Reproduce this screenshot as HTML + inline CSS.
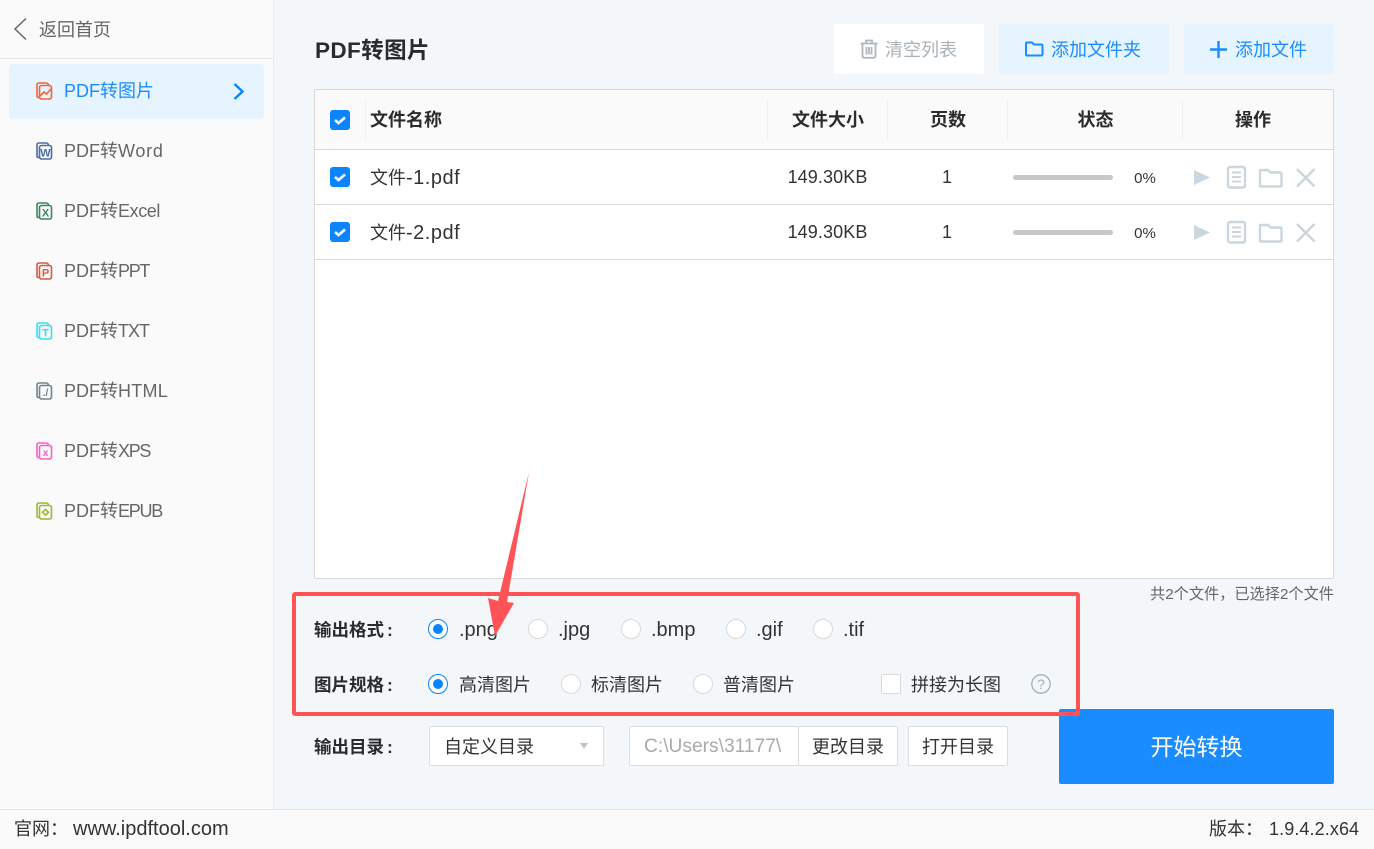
<!DOCTYPE html>
<html lang="zh-CN">
<head>
<meta charset="utf-8">
<title>PDF转图片</title>
<style>
*{box-sizing:border-box;margin:0;padding:0}
html,body{width:1374px;height:849px;overflow:hidden;background:#f4f7f9}
body{position:relative;font-family:"Liberation Sans","Noto Sans CJK SC",sans-serif;color:#333}
.a{position:absolute}
.t{position:absolute;white-space:nowrap;line-height:24px;height:24px;font-size:18px}
.c{text-align:center}
.b{font-weight:bold;color:#2b2b2b}
.s{color:#666}
.box{position:absolute;background:#fff;border:1px solid #ddd;border-radius:2px}
.r{position:absolute;width:20px;height:20px;border-radius:50%;background:#fff;border:1px solid #d9d9d9}
.r.on{border:1.5px solid #0a84ff}
.r.on:after{content:"";position:absolute;left:3.5px;top:3.5px;width:10px;height:10px;border-radius:50%;background:#0a84ff}
.ck{position:absolute;width:20px;height:20px;border-radius:3px;background:#0a84ff}
.line{position:absolute;background:#d9d9d9}
.sep{position:absolute;top:100px;width:1px;height:40px;background:#f0f0f0}
.f{font-size:20px}
svg{position:absolute;overflow:visible}
svg text{font-family:"Liberation Sans",sans-serif;font-weight:bold;text-anchor:middle}
.ic path,.ic rect{stroke-width:1.600}
</style>
</head>
<body>
<!-- sidebar -->
<div class="a" style="left:0;top:0;width:274px;height:809px;background:#fafafa;border-right:1px solid #ececec"></div>
<div class="a" style="left:0;top:58px;width:273px;height:1px;background:#e8e8e8"></div>
<svg style="left:0;top:0" width="30" height="44"><path d="M26 18.500L15 29l11 10.500" fill="none" stroke="#666" stroke-width="1.500"/></svg>
<div class="t s" style="left:39px;top:18px">返回首页</div>
<div class="a" style="left:9px;top:64px;width:255px;height:55px;background:#e6f4ff;border-radius:4px"></div>

<svg class="ic" style="left:36px;top:82px" width="17" height="18" viewBox="0 0 17 18" fill="none" stroke="#f4633a"><path d="M3 15.500H2.500Q1 15.500 1 14V3Q1 1 3 1H10Q12.500 1 12.500 3.500"/><rect x="3.500" y="3.500" width="12" height="13.500" rx="2"/><path d="M4 14l4-4 2.500 2 4.500-5"/></svg>
<div class="t" style="left:64px;top:79px;color:#1a8cff">PDF转图片</div>
<svg style="left:232px;top:82px" width="14" height="19"><path d="M2.500 2l8 7.500-8 7.500" fill="none" stroke="#0a84ff" stroke-width="2.400"/></svg>

<svg class="ic" style="left:36px;top:142px" width="17" height="18" viewBox="0 0 17 18" fill="none" stroke="#4a6fa5"><path d="M3 15.500H2.500Q1 15.500 1 14V3Q1 1 3 1H10Q12.500 1 12.500 3.500"/><rect x="3.500" y="3.500" width="12" height="13.500" rx="2"/><text x="9.500" y="14.500" font-size="11" fill="#4a6fa5" stroke="none">W</text></svg>
<div class="t s" style="left:64px;top:139px">PDF转<span style="letter-spacing:.75px">Word</span></div>

<svg class="ic" style="left:36px;top:202px" width="17" height="18" viewBox="0 0 17 18" fill="none" stroke="#3e8560"><path d="M3 15.500H2.500Q1 15.500 1 14V3Q1 1 3 1H10Q12.500 1 12.500 3.500"/><rect x="3.500" y="3.500" width="12" height="13.500" rx="2"/><text x="9.500" y="14.500" font-size="11" fill="#3e8560" stroke="none">X</text></svg>
<div class="t s" style="left:64px;top:199px">PDF转<span style="letter-spacing:-.4px">Excel</span></div>

<svg class="ic" style="left:36px;top:262px" width="17" height="18" viewBox="0 0 17 18" fill="none" stroke="#d9583f"><path d="M3 15.500H2.500Q1 15.500 1 14V3Q1 1 3 1H10Q12.500 1 12.500 3.500"/><rect x="3.500" y="3.500" width="12" height="13.500" rx="2"/><text x="9.500" y="14.500" font-size="11" fill="#d9583f" stroke="none">P</text></svg>
<div class="t s" style="left:64px;top:259px">PDF转<span style="letter-spacing:-1.3px">PPT</span></div>

<svg class="ic" style="left:36px;top:322px" width="17" height="18" viewBox="0 0 17 18" fill="none" stroke="#2ee0f5"><path d="M3 15.500H2.500Q1 15.500 1 14V3Q1 1 3 1H10Q12.500 1 12.500 3.500"/><rect x="3.500" y="3.500" width="12" height="13.500" rx="2"/><text x="9.500" y="14.500" font-size="11" fill="#2ee0f5" stroke="none">T</text></svg>
<div class="t s" style="left:64px;top:319px">PDF转<span style="letter-spacing:-1px">TXT</span></div>

<svg class="ic" style="left:36px;top:382px" width="17" height="18" viewBox="0 0 17 18" fill="none" stroke="#6f8590"><path d="M3 15.500H2.500Q1 15.500 1 14V3Q1 1 3 1H10Q12.500 1 12.500 3.500"/><rect x="3.500" y="3.500" width="12" height="13.500" rx="2"/><text x="9.500" y="14" font-size="10" fill="#6f8590" stroke="none">./</text></svg>
<div class="t s" style="left:64px;top:379px">PDF转<span style="letter-spacing:.25px">HTML</span></div>

<svg class="ic" style="left:36px;top:442px" width="17" height="18" viewBox="0 0 17 18" fill="none" stroke="#ff5cc8"><path d="M3 15.500H2.500Q1 15.500 1 14V3Q1 1 3 1H10Q12.500 1 12.500 3.500"/><rect x="3.500" y="3.500" width="12" height="13.500" rx="2"/><text x="9.500" y="14" font-size="10" fill="#ff5cc8" stroke="none">x</text></svg>
<div class="t s" style="left:64px;top:439px">PDF转<span style="letter-spacing:-1.3px">XPS</span></div>

<svg class="ic" style="left:36px;top:502px" width="17" height="18" viewBox="0 0 17 18" fill="none" stroke="#9ab832"><path d="M3 15.500H2.500Q1 15.500 1 14V3Q1 1 3 1H10Q12.500 1 12.500 3.500"/><rect x="3.500" y="3.500" width="12" height="13.500" rx="2"/><path d="M9.500 7.500l3 2.800-3 2.800-3-2.800z"/></svg>
<div class="t s" style="left:64px;top:499px">PDF转<span style="letter-spacing:-1.25px">EPUB</span></div>

<!-- header -->
<div class="t b" style="left:315px;top:37px;font-size:22.500px;height:28px;line-height:28px;letter-spacing:.4px">PDF转图片</div>
<div class="a" style="left:834px;top:24px;width:150px;height:50px;background:#fff;border-radius:2px"></div>
<svg style="left:860px;top:39px" width="18" height="20" fill="none" stroke="#adb8be" stroke-width="1.800"><path d="M.5 4.500H17.500M6 4V1.500H12V4M2.500 5V17Q2.500 18.800 4.500 18.800H13.500Q15.500 18.800 15.500 17V5M6.500 8V15.500M9 8V15.500M11.500 8V15.500"/></svg>
<div class="t" style="left:885px;top:38px;color:#a9b2b8">清空列表</div>
<div class="a" style="left:999px;top:24px;width:170px;height:50px;background:#e6f4ff;border-radius:2px"></div>
<svg style="left:1024px;top:41px" width="20" height="16" fill="none" stroke="#1a8cff" stroke-width="2"><path d="M2 2.500Q2 1.500 3 1.500H8L10 3.500H17Q18.500 3.500 18.500 5V13Q18.500 14.500 17 14.500H3Q2 14.500 2 13.500Z"/></svg>
<div class="t" style="left:1051px;top:38px;color:#1a8cff">添加文件夹</div>
<div class="a" style="left:1184px;top:24px;width:150px;height:50px;background:#e6f4ff;border-radius:2px"></div>
<svg style="left:1210px;top:41px" width="17" height="17"><path d="M8.500 0V17M0 8.500H17" stroke="#1a8cff" stroke-width="2.400"/></svg>
<div class="t" style="left:1235px;top:38px;color:#1a8cff">添加文件</div>

<!-- table -->
<div class="a" style="left:314px;top:89px;width:1020px;height:490px;background:#fff;border:1px solid #d9d9d9;border-radius:2px"></div>
<div class="a" style="left:315px;top:90px;width:1018px;height:59px;background:#fafafa"></div>
<div class="line" style="left:315px;top:149px;width:1018px;height:1px"></div>
<div class="line" style="left:315px;top:204px;width:1018px;height:1px"></div>
<div class="line" style="left:315px;top:259px;width:1018px;height:1px"></div>
<div class="sep" style="left:365px"></div>
<div class="sep" style="left:767px"></div>
<div class="sep" style="left:887px"></div>
<div class="sep" style="left:1007px"></div>
<div class="sep" style="left:1182px"></div>

<div class="ck" style="left:330px;top:110px"><svg width="20" height="20"><path d="M5 10l3.500 3 6.500-5.500" fill="none" stroke="#fff" stroke-width="2.600"/></svg></div>
<div class="t b" style="left:370px;top:108px">文件名称</div>
<div class="t b c" style="left:768px;top:108px;width:120px">文件大小</div>
<div class="t b c" style="left:888px;top:108px;width:120px">页数</div>
<div class="t b c" style="left:1008px;top:108px;width:175px">状态</div>
<div class="t b c" style="left:1183px;top:108px;width:140px">操作</div>

<!-- row 1 -->
<div class="ck" style="left:330px;top:167px"><svg width="20" height="20"><path d="M5 10l3.500 3 6.500-5.500" fill="none" stroke="#fff" stroke-width="2.600"/></svg></div>
<div class="t" style="left:370px;top:166px">文件<span class="f" style="letter-spacing:.5px">-1.pdf</span></div>
<div class="t c" style="left:767px;top:165px;width:121px;letter-spacing:.1px">149.30KB</div>
<div class="t c" style="left:887px;top:165px;width:120px">1</div>
<div class="a" style="left:1013px;top:175px;width:100px;height:5px;background:#c8c8c8;border-radius:3px"></div>
<div class="t c" style="left:1125px;top:167px;width:40px;font-size:15px">0%</div>
<svg style="left:1194px;top:169px" width="122" height="20" fill="none" stroke="#ccd6dd"><path d="M0 1V16L16 8.500Z" fill="#ccd6dd" stroke="none"/><rect x="34" y="-2" width="17" height="20.500" rx="2" stroke-width="2.400"/><path d="M38 3.500H47M38 8H47M38 12.500H47" stroke-width="2"/><path d="M66 2Q66 1 67 1H74L76.500 3.500H86Q87.500 3.500 87.500 5V16.500Q87.500 17.500 86 17.500H67Q66 17.500 66 16.500Z" stroke-width="2.400"/><path d="M103 0L120.500 17.500M120.500 0L103 17.500" stroke-width="2.400"/></svg>

<!-- row 2 -->
<div class="ck" style="left:330px;top:222px"><svg width="20" height="20"><path d="M5 10l3.500 3 6.500-5.500" fill="none" stroke="#fff" stroke-width="2.600"/></svg></div>
<div class="t" style="left:370px;top:221px">文件<span class="f" style="letter-spacing:.5px">-2.pdf</span></div>
<div class="t c" style="left:767px;top:220px;width:121px;letter-spacing:.1px">149.30KB</div>
<div class="t c" style="left:887px;top:220px;width:120px">1</div>
<div class="a" style="left:1013px;top:230px;width:100px;height:5px;background:#c8c8c8;border-radius:3px"></div>
<div class="t c" style="left:1125px;top:222px;width:40px;font-size:15px">0%</div>
<svg style="left:1194px;top:224px" width="122" height="20" fill="none" stroke="#ccd6dd"><path d="M0 1V16L16 8.500Z" fill="#ccd6dd" stroke="none"/><rect x="34" y="-2" width="17" height="20.500" rx="2" stroke-width="2.400"/><path d="M38 3.500H47M38 8H47M38 12.500H47" stroke-width="2"/><path d="M66 2Q66 1 67 1H74L76.500 3.500H86Q87.500 3.500 87.500 5V16.500Q87.500 17.500 86 17.500H67Q66 17.500 66 16.500Z" stroke-width="2.400"/><path d="M103 0L120.500 17.500M120.500 0L103 17.500" stroke-width="2.400"/></svg>

<div class="t" style="right:40px;top:583px;font-size:15.200px;color:#666">共2个文件，已选择2个文件</div>

<!-- options -->
<div class="t b" style="left:314px;top:618px;font-size:17.500px">输出格式<span style="margin-left:3px">:</span></div>
<div class="r on" style="left:428px;top:619px"></div><div class="t f" style="left:459px;top:618px">.png</div>
<div class="r" style="left:528px;top:619px"></div><div class="t f" style="left:558px;top:618px">.jpg</div>
<div class="r" style="left:621px;top:619px"></div><div class="t f" style="left:651px;top:618px">.bmp</div>
<div class="r" style="left:726px;top:619px"></div><div class="t f" style="left:756px;top:618px">.gif</div>
<div class="r" style="left:813px;top:619px"></div><div class="t f" style="left:843px;top:618px">.tif</div>

<div class="t b" style="left:314px;top:673px;font-size:17.500px">图片规格<span style="margin-left:3px">:</span></div>
<div class="r on" style="left:428px;top:674px"></div><div class="t" style="left:459px;top:673px">高清图片</div>
<div class="r" style="left:561px;top:674px"></div><div class="t" style="left:591px;top:673px">标清图片</div>
<div class="r" style="left:693px;top:674px"></div><div class="t" style="left:723px;top:673px">普清图片</div>
<div class="a" style="left:881px;top:674px;width:20px;height:20px;background:#fff;border:1px solid #d9d9d9;border-radius:2px"></div>
<div class="t" style="left:911px;top:673px">拼接为长图</div>
<svg style="left:1031px;top:674px" width="20" height="20"><circle cx="10" cy="10" r="9.200" fill="none" stroke="#a3b0b8" stroke-width="1.300"/><text x="10" y="15" font-size="14" fill="#a3b0b8" style="font-weight:normal">?</text></svg>

<!-- output dir -->
<div class="t b" style="left:314px;top:735px;font-size:17.500px">输出目录<span style="margin-left:3px">:</span></div>
<div class="box" style="left:429px;top:726px;width:175px;height:40px"></div>
<div class="t" style="left:444px;top:735px">自定义目录</div>
<svg style="left:580px;top:743px" width="8" height="6"><path d="M0 0H8L4 6Z" fill="#c4c4c4"/></svg>
<div class="box" style="left:629px;top:726px;width:170px;height:40px"></div>
<div class="t" style="left:644px;top:735px;color:#aaa;width:150px;overflow:hidden;font-size:19.200px">C:\Users\31177\</div>
<div class="box" style="left:798px;top:726px;width:100px;height:40px"></div>
<div class="t c" style="left:798px;top:735px;width:100px">更改目录</div>
<div class="box" style="left:908px;top:726px;width:100px;height:40px"></div>
<div class="t c" style="left:908px;top:735px;width:100px">打开目录</div>
<div class="a" style="left:1059px;top:709px;width:275px;height:75px;background:#1a8cff;border-radius:2px"></div>
<div class="t c" style="left:1059px;top:732px;width:275px;font-size:23px;height:30px;line-height:30px;color:#fff">开始转换</div>

<!-- footer -->
<div class="a" style="left:0;top:809px;width:1374px;height:40px;background:#fafafa;border-top:1px solid #e6e6e6"></div>
<div class="t" style="left:14px;top:817px">官网：</div>
<div class="t f" style="left:73px;top:817px">www.ipdftool.com</div>
<div class="t" style="left:1209px;top:817px">版本：</div>
<div class="t" style="left:1269px;top:817px;letter-spacing:.1px">1.9.4.2.x64</div>

<!-- annotation -->
<div class="a" style="left:292px;top:592px;width:788px;height:124px;border:4.500px solid #ff5357;border-radius:3px"></div>
<svg style="left:0;top:0" width="1374" height="849"><path d="M529 472L507 602L514 603L495 636L488 598L498 601Z" fill="#ff5357"/></svg>
</body>
</html>
